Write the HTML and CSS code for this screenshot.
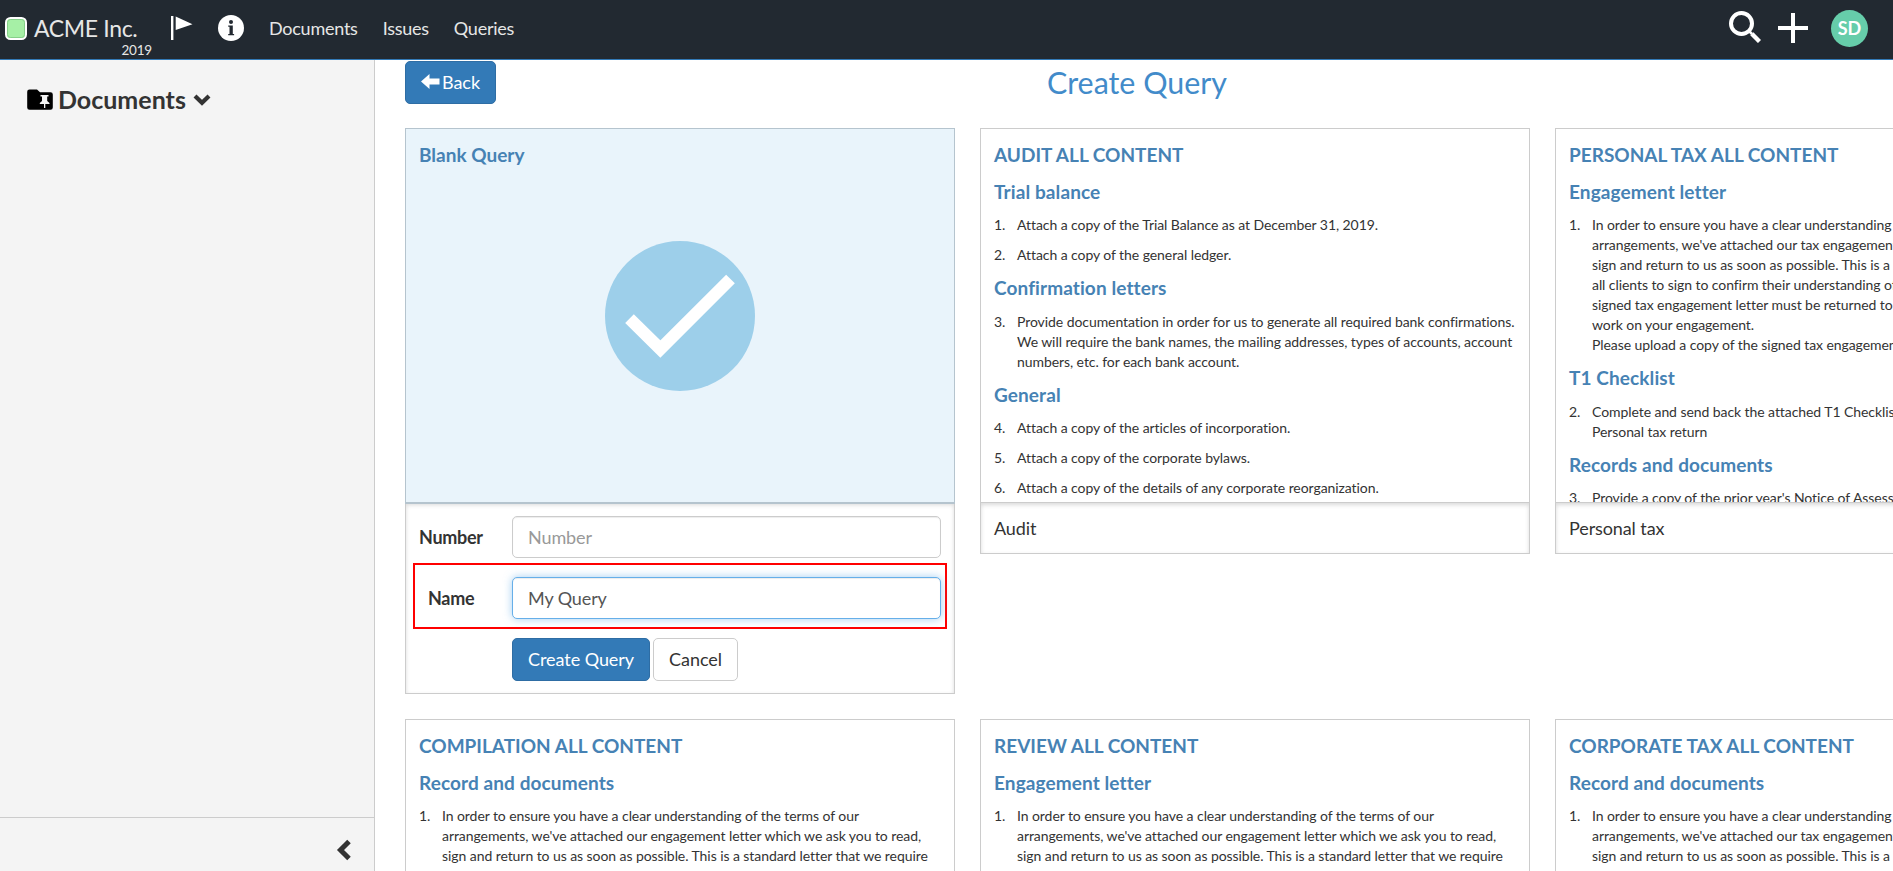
FILE: index.html
```html
<!DOCTYPE html>
<html lang="en">
<head>
<meta charset="utf-8">
<title>Create Query</title>
<link rel="stylesheet" href="styles.css">
</head>
<body>
<header class="topbar">
  <div class="brand">
    <svg class="brand-logo" width="22" height="24" viewBox="0 0 22 24"><rect x="1" y="2" width="20" height="21" rx="4.5" fill="#a6f0a6" stroke="#fff" stroke-width="2"/><rect x="2.5" y="3.500" width="17" height="18" rx="3" fill="none" stroke="#86cf8a"/></svg>
    <div class="brand-text"><span class="brand-name">ACME Inc.</span><span class="brand-year">2019</span></div>
  </div>
  <svg class="flag" width="22" height="24" viewBox="0 0 22 24"><path d="M0 0h2.4v24H0zM4.700 .5 21.500 8.200 4.700 14z" fill="#fff"/></svg>
  <svg class="info" width="26" height="26" viewBox="0 0 26 26"><circle cx="13" cy="13" r="13" fill="#fff"/><circle cx="13" cy="7" r="2" fill="#222931"/><path d="M10.200 10.500h4.600v8.500h1.300V20.300H10.200V19h1.300v-7.200H10.200z" fill="#222931"/></svg>
  <nav class="nav"><a>Documents</a><a>Issues</a><a>Queries</a></nav>
  <div class="tools">
    <svg width="32" height="32" viewBox="0 0 32 32"><circle cx="12.500" cy="12.500" r="10.500" fill="none" stroke="#fff" stroke-width="4"/><path d="M20 20l3 3" stroke="#fff" stroke-width="2.500"/><path d="M22.800 22.800l7.700 7.700" stroke="#fff" stroke-width="4.400"/></svg>
    <svg class="plus" width="30" height="30" viewBox="0 0 30 30"><path d="M13 0h4v13h13v4H17v13h-4V17H0v-4h13z" fill="#fff"/></svg>
    <span class="avatar">SD</span>
  </div>
</header>
<div class="layout">
  <aside class="sidebar">
    <div class="side-title">
      <svg width="26" height="21" viewBox="0 0 26 21"><path d="M2.500 .5h7.500l3 2.700h10.500A2.300 2.300 0 0 1 25.800 5.500v13a2.300 2.300 0 0 1-2.300 2.300h-21A2.300 2.300 0 0 1 .2 18.500v-15.700A2.300 2.300 0 0 1 2.500 .5z" fill="#000"/><path d="M13.500 6h8v1.500h-1.300v4.500l2.300 2v1h-4.200V19h-1.300v-4h-4.200v-1l2.200-2V7.500h-1.500z" fill="#f4f4f4"/></svg>
      <span class="side-label">Documents</span>
      <svg class="caret" width="18" height="12" viewBox="0 0 18 12"><path d="M2 2l7 6.800L16 2" fill="none" stroke="#333" stroke-width="4.200"/></svg>
    </div>
    <div class="side-foot"><svg width="16" height="22" viewBox="0 0 16 22"><path d="M13 2.500 4.500 11l8.500 8.500" fill="none" stroke="#333" stroke-width="5"/></svg></div>
  </aside>
  <main class="main">
    <div class="page-head">
      <button class="btn btn-primary back"><svg width="19" height="15" viewBox="0 0 19 15"><path d="M0 7.500 8.500 0v4.500H18.500v6H8.500V15z" fill="#fff"/></svg>Back</button>
      <h1>Create Query</h1>
    </div>
    <div class="grid">
      <section class="card">
        <div class="preview selected">
          <h2>Blank Query</h2>
          <svg class="tick" width="150" height="150" viewBox="0 0 150 150"><circle cx="75" cy="75" r="75" fill="#9dcfea"/><path d="M24.500 77.700 55.300 108 125.500 38" fill="none" stroke="#fff" stroke-width="12.300"/></svg>
        </div>
        <form class="form">
          <div class="row"><label>Number</label><input type="text" placeholder="Number"></div>
          <div class="row marked"><label>Name</label><input class="active" type="text" value="My Query"></div>
          <div class="actions"><button type="button" class="btn btn-primary">Create Query</button><button type="button" class="btn btn-plain">Cancel</button></div>
        </form>
      </section>
      <section class="card">
        <div class="preview">
          <h2>AUDIT ALL CONTENT</h2>
          <h3>Trial balance</h3>
          <ol><li>Attach a copy of the Trial Balance as at December 31, 2019.</li><li>Attach a copy of the general ledger.</li></ol>
          <h3>Confirmation letters</h3>
          <ol start="3"><li>Provide documentation in order for us to generate all required bank confirmations.<br>We will require the bank names, the mailing addresses, types of accounts, account<br>numbers, etc. for each bank account.</li></ol>
          <h3>General</h3>
          <ol start="4"><li>Attach a copy of the articles of incorporation.</li><li>Attach a copy of the corporate bylaws.</li><li>Attach a copy of the details of any corporate reorganization.</li></ol>
        </div>
        <div class="caption">Audit</div>
      </section>
      <section class="card">
        <div class="preview">
          <h2>PERSONAL TAX ALL CONTENT</h2>
          <h3>Engagement letter</h3>
          <ol><li>In order to ensure you have a clear understanding of the terms of our<br>arrangements, we've attached our tax engagement letter which we ask you to<br>sign and return to us as soon as possible. This is a standard letter that we<br>all clients to sign to confirm their understanding of our arrangements. The<br>signed tax engagement letter must be returned to us before we begin<br>work on your engagement.<br>Please upload a copy of the signed tax engagement letter.</li></ol>
          <h3>T1 Checklist</h3>
          <ol start="2"><li>Complete and send back the attached T1 Checklist.<br>Personal tax return</li></ol>
          <h3>Records and documents</h3>
          <ol start="3"><li>Provide a copy of the prior year's Notice of Assessment.</li></ol>
        </div>
        <div class="caption">Personal tax</div>
      </section>
      <section class="card">
        <div class="preview">
          <h2>COMPILATION ALL CONTENT</h2>
          <h3>Record and documents</h3>
          <ol><li>In order to ensure you have a clear understanding of the terms of our<br>arrangements, we've attached our engagement letter which we ask you to read,<br>sign and return to us as soon as possible. This is a standard letter that we require</li></ol>
        </div>
      </section>
      <section class="card">
        <div class="preview">
          <h2>REVIEW ALL CONTENT</h2>
          <h3>Engagement letter</h3>
          <ol><li>In order to ensure you have a clear understanding of the terms of our<br>arrangements, we've attached our engagement letter which we ask you to read,<br>sign and return to us as soon as possible. This is a standard letter that we require</li></ol>
        </div>
      </section>
      <section class="card">
        <div class="preview">
          <h2>CORPORATE TAX ALL CONTENT</h2>
          <h3>Record and documents</h3>
          <ol><li>In order to ensure you have a clear understanding of the terms of our<br>arrangements, we've attached our tax engagement letter which we ask you to<br>sign and return to us as soon as possible. This is a standard letter that we</li></ol>
        </div>
      </section>
    </div>
  </main>
</div>
</body>
</html>
```

FILE: styles.css
```css
* { box-sizing: border-box; }
body { margin: 0; height: 871px; overflow: hidden; display: flex; flex-direction: column; font: 18px/26px Lato, sans-serif; font-variant-ligatures: none; color: #333; background: #fff; }
svg { display: block; flex: none; }
h1, h2, h3, ol { margin: 0; padding: 0; }

.topbar { flex: none; height: 60px; display: flex; align-items: flex-start; background: #222931; border-bottom: 1px solid #337ab7; color: #e6e6e6; }
.brand { display: flex; width: 171px; padding-left: 5px; }
.brand-logo { margin-top: 16px; }
.brand-text { width: 125px; padding-left: 7px; display: flex; flex-direction: column; }
.brand-name { font-size: 23px; letter-spacing: -.35px; line-height: 28px; padding-top: 14px; white-space: nowrap; }
.brand-year { font-size: 13.5px; letter-spacing: -.2px; line-height: 14px; padding-top: 1px; align-self: flex-end; }
.flag { margin-top: 16px; }
.info { margin: 15px 0 0 25px; }
.nav { display: flex; gap: 25px; margin: 15px 0 0 25px; letter-spacing: -.25px; }
.tools { margin-left: auto; display: flex; padding: 11px 25px 0 0; }
.plus { margin: 2px 23px 0 17px; }
.avatar { width: 37px; height: 37px; margin-top: -1px; border-radius: 50%; background: #66cdaa; color: #fff; font-weight: bold; line-height: 36px; text-align: center; }

.layout { flex: 1; min-height: 0; display: flex; }
.sidebar { flex: none; width: 375px; background: #f4f4f4; border-right: 1px solid #ccc; display: flex; flex-direction: column; justify-content: space-between; }
.side-title { display: flex; align-items: flex-start; padding: 29px 0 0 27px; }
.side-label { width: 128px; font-size: 25px; line-height: 30px; font-weight: bold; margin: -5px 7px 0 5px; }
.caret { margin-top: 5px; }
.side-foot { height: 54px; border-top: 1px solid #ccc; display: flex; justify-content: flex-end; padding: 21px 22px 0 0; }

.main { flex: 1; min-width: 0; padding: 1px 0 0 30px; overflow: hidden; }
.page-head { height: 67px; width: 1464px; display: grid; grid-template-columns: 1fr auto 1fr; align-items: start; justify-items: start; }
h1 { font-size: 30.4px; line-height: 42px; font-weight: 400; color: #428bca; }

.btn { height: 43px; padding: 0 15px 2px; border: 1px solid #ccc; border-radius: 5px; font: 18px/26px Lato, sans-serif; letter-spacing: -.05px; white-space: nowrap; }
.btn-primary { background: #337ab7; border-color: #2e6da4; color: #fff; }
.btn-plain { background: #fff; color: #333; }
.back { display: flex; align-items: center; gap: 2px; width: 91px; }

.grid { display: grid; grid-template-columns: repeat(3, 550px); gap: 25px; align-items: start; }
.card { border: 1px solid #ccc; }
.preview { height: 374px; padding: 13px; overflow: hidden; border-bottom: 1px solid #ccc; white-space: nowrap; }
.selected { background: #e9f4fb; outline: 1px solid #b5c4ce; border-bottom-color: #b5c4ce; }
.tick { margin: 73px auto 0; }
h2, h3 { font-size: 19px; line-height: 26px; font-weight: bold; color: #4682b4; margin-bottom: 10.5px; }
h3 { letter-spacing: .1px; }
ol { list-style: none; font-size: 14px; line-height: 20px; letter-spacing: -.07px; counter-reset: n; }
ol[start="2"] { counter-reset: n 1; }
ol[start="3"] { counter-reset: n 2; }
ol[start="4"] { counter-reset: n 3; }
li { padding-left: 23px; margin-bottom: 10px; counter-increment: n; }
li::before { content: counter(n) "."; float: left; margin-left: -23px; }
.caption { height: 50px; padding: 12px 13px; letter-spacing: -.1px; box-shadow: inset 0 2px 4px rgba(0, 0, 0, .15); }

.form { height: 190px; padding: 13px; box-shadow: inset 0 2px 4px rgba(0, 0, 0, .15); }
.row { display: flex; align-items: center; font-weight: bold; letter-spacing: -.3px; }
.row label { width: 93px; padding-bottom: 1px; }
.row input { flex: 1; min-width: 0; height: 42px; padding: 0 15px; border: 1px solid #ccc; border-radius: 5px; font: 18px/26px Lato, sans-serif; letter-spacing: -.1px; color: #555; box-shadow: inset 0 1px 1px rgba(0, 0, 0, .075); outline: 0; }
.row input::placeholder { color: #999; }
.row .active { border-color: #66afe9; box-shadow: inset 0 1px 1px rgba(0, 0, 0, .075), 0 0 8px rgba(102, 175, 233, .6); }
.marked { height: 66px; margin: 5px -6px 9px; padding: 4px 4px 0 13px; border: 2px solid #f00; }
.marked label { width: 84px; }
.actions { display: flex; gap: 3px; padding-left: 93px; }
```
